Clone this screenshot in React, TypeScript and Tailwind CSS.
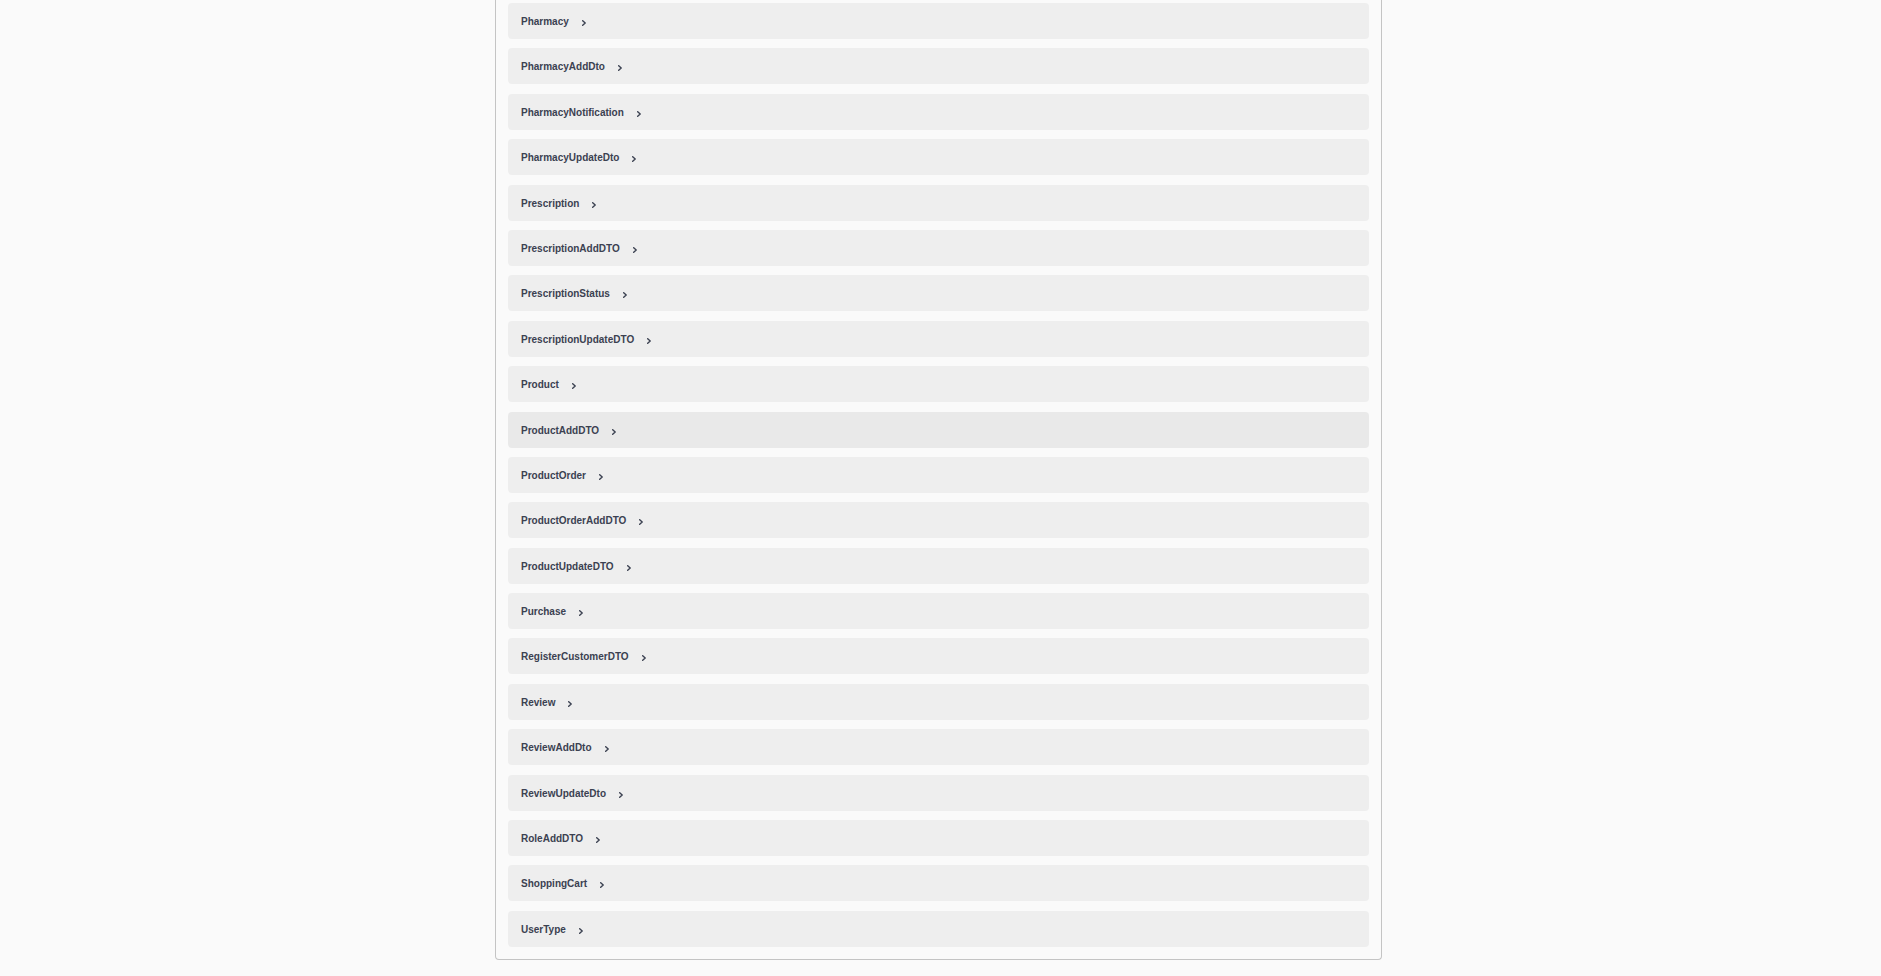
const models = [
  "Pharmacy",
  "PharmacyAddDto",
  "PharmacyNotification",
  "PharmacyUpdateDto",
  "Prescription",
  "PrescriptionAddDTO",
  "PrescriptionStatus",
  "PrescriptionUpdateDTO",
  "Product",
  "ProductAddDTO",
  "ProductOrder",
  "ProductOrderAddDTO",
  "ProductUpdateDTO",
  "Purchase",
  "RegisterCustomerDTO",
  "Review",
  "ReviewAddDto",
  "ReviewUpdateDto",
  "RoleAddDTO",
  "ShoppingCart",
  "UserType",
];

function Arrow() {
  return (
    <svg viewBox="0 0 4 6" className="w-[4px] h-[6px] ml-[13px] mt-[4px]">
      <polyline
        points="0.7,0.7 3.2,3 0.7,5.3"
        fill="none"
        stroke="#3b4151"
        strokeWidth="1.4"
        strokeLinecap="round"
        strokeLinejoin="round"
      />
    </svg>
  );
}

function ModelRow({ name }: { name: string }) {
  const hovered = name === "ProductAddDTO";
  return (
    <div
      className={`h-[36px] rounded-[4px] flex items-center pl-[13px] ${
        hovered ? "bg-[#e9e9e9]" : "bg-[#eeeeee]"
      }`}
    >
      <span className="mt-[2px] text-[10px] font-bold text-[#3b4151] leading-none">{name}</span>
      <Arrow />
    </div>
  );
}

export default function App() {
  return (
    <div className="min-h-screen bg-[#fafafa] font-['Liberation_Sans',Arial,sans-serif]">
      <div className="ml-[495px] w-[887px] border border-t-0 border-[#c4c4c4] rounded-b-[4px] pt-[3px] pb-[12px] px-[12px]">
        <div className="flex flex-col gap-[9.4px]">
          {models.map((m) => (
            <ModelRow key={m} name={m} />
          ))}
        </div>
      </div>
    </div>
  );
}
